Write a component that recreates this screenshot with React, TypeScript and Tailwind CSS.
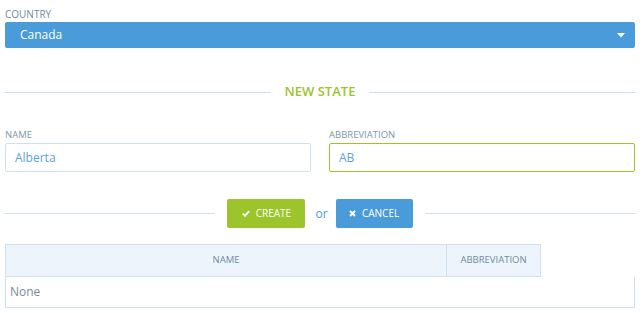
import React from "react";

const font = { fontFamily: '"Open Sans", "Noto Sans", sans-serif' };

export default function App() {
  return (
    <div className="w-[642px] h-[313px] bg-white overflow-hidden" style={font}>
      <div className="ml-[5px] w-[630px] pt-[8px]">
        <div className="text-[10px] leading-[12px] text-[#6f8ba0] uppercase">Country</div>
        <div className="mt-[2px] h-[26px] rounded-[2px] bg-[#4a9bda] flex items-center justify-between pl-[15px] pr-[10px]">
          <span className="text-[12px] text-white">Canada</span>
          <svg width="8" height="5" viewBox="0 0 8 5">
            <path d="M0 0 L8 0 L4 4.5 Z" fill="white" />
          </svg>
        </div>

        <div className="mt-[34px] h-[20px] flex items-center">
          <div className="flex-1 h-px bg-[#cfe1f0]" />
          <div className="px-[14px] text-[13px] font-semibold text-[#9cc42b]">NEW STATE</div>
          <div className="flex-1 h-px bg-[#cfe1f0]" />
        </div>

        <div className="mt-[27px] flex gap-[18px]">
          <div className="flex-1">
            <div className="text-[9.5px] leading-[12px] text-[#7f97aa]">NAME</div>
            <div className="mt-[2px] h-[29px] border border-[#cfe1f0] rounded-[2px] flex items-center pl-[9px] text-[12px] text-[#5aa3dd]">
              Alberta
            </div>
          </div>
          <div className="flex-1">
            <div className="text-[9.5px] leading-[12px] text-[#7f97aa]">ABBREVIATION</div>
            <div className="mt-[2px] h-[29px] border border-[#9cc42b] rounded-[2px] flex items-center pl-[9px] text-[12px] text-[#5aa3dd]">
              AB
            </div>
          </div>
        </div>

        <div className="mt-[27px] h-[29px] flex items-center">
          <div className="flex-1 h-px bg-[#cfe1f0]" />
          <div className="mx-[12px] flex items-center">
            <div className="w-[78px] h-[29px] rounded-[2px] bg-[#9cc42b] flex items-center justify-center gap-[6px] text-white text-[10px]">
              <svg width="8" height="7" viewBox="0 0 8 7">
                <path d="M0.8 3.6 L3 5.7 L7.2 1.2" stroke="white" strokeWidth="1.9" fill="none" />
              </svg>
              <span>CREATE</span>
            </div>
            <span className="ml-[10px] mr-[8px] text-[12px] text-[#4a9bda]">or</span>
            <div className="w-[77px] h-[29px] rounded-[2px] bg-[#4a9bda] flex items-center justify-center gap-[6px] text-white text-[10px]">
              <svg width="7" height="7" viewBox="0 0 7 7">
                <path d="M1 1 L6 6 M6 1 L1 6" stroke="white" strokeWidth="1.9" fill="none" />
              </svg>
              <span>CANCEL</span>
            </div>
          </div>
          <div className="flex-1 h-px bg-[#cfe1f0]" />
        </div>

        <div className="mt-[16px]">
          <div className="flex w-[536px] h-[33px] bg-[#edf4fb] border border-[#cfe1f0] text-[9.5px] text-[#6f8ba0]">
            <div className="w-[441px] border-r border-[#cfe1f0] flex items-center justify-center">NAME</div>
            <div className="flex-1 flex items-center justify-center">ABBREVIATION</div>
          </div>
          <div className="h-[31px] border border-t-0 border-[#cfe1f0] flex items-center pl-[4px] text-[12px] text-[#7d8b98]">
            None
          </div>
        </div>
      </div>
    </div>
  );
}
